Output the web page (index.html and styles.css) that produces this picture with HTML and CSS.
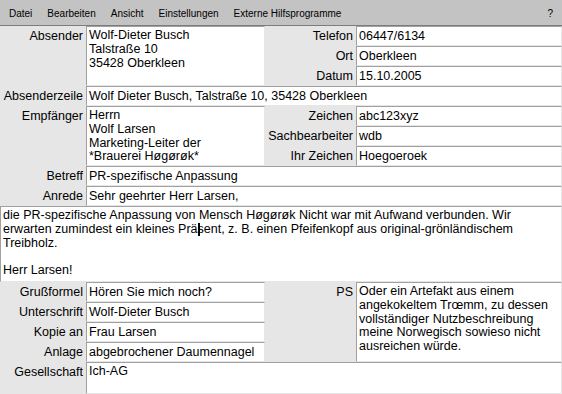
FILE: index.html
```html
<!DOCTYPE html>
<html lang="de">
<head>
<meta charset="utf-8">
<title>Brief</title>
<link rel="stylesheet" href="styles.css">
</head>
<body>
<div class="menubar">
  <span class="menu">Datei</span>
  <span class="menu">Bearbeiten</span>
  <span class="menu">Ansicht</span>
  <span class="menu">Einstellungen</span>
  <span class="menu">Externe Hilfsprogramme</span>
  <span class="menu help">?</span>
</div>
<div class="form">
  <div class="lbl tall">Absender</div>
  <div class="text tall">Wolf-Dieter Busch<br>Talstraße 10<br>35428 Oberkleen</div>
  <div class="lbl">Telefon</div><div class="entry">06447/6134</div>
  <div class="lbl">Ort</div><div class="entry">Oberkleen</div>
  <div class="lbl">Datum</div><div class="entry">15.10.2005</div>

  <div class="lbl">Absenderzeile</div><div class="entry wide">Wolf Dieter Busch, Talstraße 10, 35428 Oberkleen</div>

  <div class="lbl tall">Empfänger</div>
  <div class="text tall">Herrn<br>Wolf Larsen<br>Marketing-Leiter der<br>*Brauerei Høgørøk*</div>
  <div class="lbl">Zeichen</div><div class="entry">abc123xyz</div>
  <div class="lbl">Sachbearbeiter</div><div class="entry">wdb</div>
  <div class="lbl">Ihr Zeichen</div><div class="entry">Hoegoeroek</div>

  <div class="lbl">Betreff</div><div class="entry wide">PR-spezifische Anpassung</div>
  <div class="lbl">Anrede</div><div class="entry wide">Sehr geehrter Herr Larsen,</div>

  <div class="text full">die PR-spezifische Anpassung von Mensch Høgørøk Nicht war mit Aufwand verbunden. Wir<br>erwarten zumindest ein kleines Prä<span class="cursor"></span>sent, z. B. einen Pfeifenkopf aus original-grönländischem<br>Treibholz.<br><br>Herr Larsen!</div>

  <div class="lbl">Grußformel</div><div class="entry">Hören Sie mich noch?</div>
  <div class="lbl tall4">PS</div>
  <div class="text tall4">Oder ein Artefakt aus einem<br>angekokeltem Trœmm, zu dessen<br>vollständiger Nutzbeschreibung<br>meine Norwegisch sowieso nicht<br>ausreichen würde.</div>
  <div class="lbl">Unterschrift</div><div class="entry">Wolf-Dieter Busch</div>
  <div class="lbl">Kopie an</div><div class="entry">Frau Larsen</div>
  <div class="lbl">Anlage</div><div class="entry">abgebrochener Daumennagel</div>

  <div class="lbl">Gesellschaft</div><div class="text wide">Ich-AG</div>
</div>
</body>
</html>
```
FILE: styles.css
```css
html, body {
  margin: 0;
  padding: 0;
}
body {
  width: 562px;
  height: 394px;
  overflow: hidden;
  background: #e6e6e6;
  color: #000;
  font-family: "Liberation Sans", Arial, sans-serif;
  font-size: 12.5px;
}
.menubar {
  display: flex;
  align-items: center;
  box-sizing: border-box;
  height: 26px;
  padding: 1px 0 0 9px;
  background: #c3c3c3;
  border-bottom: 1px solid #7c7c7c;
  font-size: 10px;
  gap: 15px;
}
.menu.help {
  margin-left: auto;
  margin-right: 9px;
}
.form {
  display: grid;
  grid-template-columns: 86px 179px 91px 206px;
  grid-template-rows: repeat(9, 20px) 76px repeat(4, 20px) 32px;
}
.tall { grid-row: span 3; }
.tall4 { grid-row: span 4; }
.wide { grid-column: span 3; }
.full { grid-column: span 4; }
.lbl {
  text-align: right;
  padding-right: 3px;
  line-height: 20px;
  white-space: nowrap;
}
.tall, .tall4 {
  padding-top: 1px;
  line-height: 19px;
}
.entry, .text {
  background: #fff;
  border-top: 1px solid #a0a0a0;
  border-left: 1px solid #a0a0a0;
  border-right: 1px solid #e6e6e6;
  border-bottom: 1px solid #e6e6e6;
  padding: 0 2px;
  white-space: nowrap;
  overflow: hidden;
}
.entry {
  line-height: 18px;
}
.text {
  padding-top: 2px;
  line-height: 13.8px;
}
.cursor {
  display: inline-block;
  width: 0;
  height: 13px;
  vertical-align: -3px;
  border-left: 2px solid #000;
  margin-right: -2px;
}
```
